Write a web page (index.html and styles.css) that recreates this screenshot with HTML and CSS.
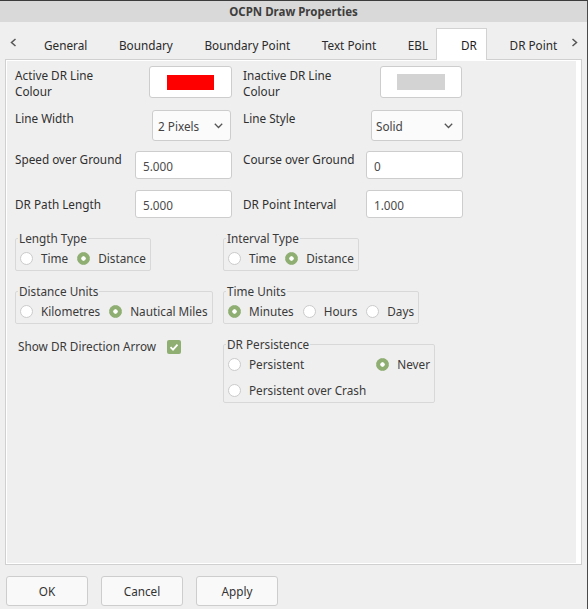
FILE: index.html
```html
<!DOCTYPE html>
<html>
<head>
<meta charset="utf-8">
<title>OCPN Draw Properties</title>
<link rel="stylesheet" href="styles.css">
</head>
<body>
<div class="window">
  <div class="titlebar">OCPN Draw Properties</div>
  <div class="tabbar">
    <svg class="arrow" width="7" height="9" viewBox="0 0 7 9"><path d="M5.5 1 L1.5 4.5 L5.5 8"/></svg>
    <div class="tabs">
      <div class="tab">General</div>
      <div class="tab">Boundary</div>
      <div class="tab">Boundary Point</div>
      <div class="tab">Text Point</div>
      <div class="tab">EBL</div>
      <div class="tab tab-active">DR</div>
      <div class="tab">DR Point</div>
    </div>
    <svg class="arrow" width="7" height="9" viewBox="0 0 7 9"><path d="M1.5 1 L5.5 4.5 L1.5 8"/></svg>
  </div>
  <div class="panel">
    <div class="form">
      <div class="form-row row-colour">
        <div class="field">
          <div class="label label-2line">Active DR Line<br>Colour</div>
          <div class="colour-btn"><span class="swatch swatch-red"></span></div>
        </div>
        <div class="field">
          <div class="label label-2line">Inactive DR Line<br>Colour</div>
          <div class="colour-btn colour-btn-right"><span class="swatch swatch-grey"></span></div>
        </div>
      </div>
      <div class="form-row row-select">
        <div class="field">
          <div class="label">Line Width</div>
          <div class="select select-width"><span>2 Pixels</span><svg class="chev" width="9" height="6" viewBox="0 0 9 6"><path d="M0.8 0.8 L4.5 4.5 L8.2 0.8"/></svg></div>
        </div>
        <div class="field">
          <div class="label">Line Style</div>
          <div class="select select-style"><span>Solid</span><svg class="chev" width="9" height="6" viewBox="0 0 9 6"><path d="M0.8 0.8 L4.5 4.5 L8.2 0.8"/></svg></div>
        </div>
      </div>
      <div class="form-row row-speed">
        <div class="field">
          <div class="label">Speed over Ground</div>
          <div class="input">5.000</div>
        </div>
        <div class="field">
          <div class="label">Course over Ground</div>
          <div class="input">0</div>
        </div>
      </div>
      <div class="form-row row-path">
        <div class="field field-center">
          <div class="label">DR Path Length</div>
          <div class="input">5.000</div>
        </div>
        <div class="field field-center">
          <div class="label">DR Point Interval</div>
          <div class="input">1.000</div>
        </div>
      </div>
    </div>

    <div class="groups">
      <fieldset class="group">
        <legend>Length Type</legend>
        <div class="radio-row">
          <span class="radio"><span class="dot"></span>Time</span>
          <span class="radio"><span class="dot dot-on"></span>Distance</span>
        </div>
      </fieldset>
      <fieldset class="group">
        <legend>Interval Type</legend>
        <div class="radio-row">
          <span class="radio"><span class="dot"></span>Time</span>
          <span class="radio"><span class="dot dot-on"></span>Distance</span>
        </div>
      </fieldset>
      <fieldset class="group">
        <legend>Distance Units</legend>
        <div class="radio-row">
          <span class="radio"><span class="dot"></span>Kilometres</span>
          <span class="radio"><span class="dot dot-on"></span>Nautical Miles</span>
        </div>
      </fieldset>
      <fieldset class="group">
        <legend>Time Units</legend>
        <div class="radio-row">
          <span class="radio"><span class="dot dot-on"></span>Minutes</span>
          <span class="radio"><span class="dot"></span>Hours</span>
          <span class="radio"><span class="dot"></span>Days</span>
        </div>
      </fieldset>
      <div class="check-row">
        <span>Show DR Direction Arrow</span>
        <span class="checkbox"><svg width="14" height="14" viewBox="0 0 14 14"><path d="M3.5 7.2 L6 9.6 L10.5 4.6"/></svg></span>
      </div>
      <fieldset class="group">
        <legend>DR Persistence</legend>
        <div class="radio-grid">
          <span class="radio"><span class="dot"></span>Persistent</span>
          <span class="radio"><span class="dot dot-on"></span>Never</span>
          <span class="radio"><span class="dot"></span>Persistent over Crash</span>
        </div>
      </fieldset>
    </div>
  </div>
  <div class="buttons">
    <div class="button">OK</div>
    <div class="button">Cancel</div>
    <div class="button">Apply</div>
  </div>
</div>
</body>
</html>
```

FILE: styles.css
```css
* {
  box-sizing: border-box;
}

html, body {
  margin: 0;
  padding: 0;
  background: #efefef;
}

body {
  font-family: "Noto Sans", "Open Sans", "DejaVu Sans", sans-serif;
  font-size: 11.75px;
  color: #2f2f2f;
}

.window {
  width: 588px;
  height: 609px;
  background: #efefef;
  border-top: 1px solid #3c3c3c;
  border-right: 1px solid #4a4a4a;
  display: flex;
  flex-direction: column;
}

.titlebar {
  height: 21px;
  background: #d9d9d9;
  display: flex;
  align-items: center;
  justify-content: center;
  font-weight: bold;
  font-size: 11.5px;
  color: #3e3e3e;
  padding-bottom: 1px;
}

.tabbar {
  position: relative;
  z-index: 1;
  height: 38px;
  display: flex;
  align-items: flex-start;
  padding-left: 10px;
}

.arrow {
  margin-top: 16px;
  flex: none;
}

.arrow path {
  fill: none;
  stroke: #555;
  stroke-width: 1.5;
}

.tabs {
  margin-left: 11px;
  width: 543px;
  height: 38px;
  display: flex;
  align-items: flex-end;
  overflow: hidden;
  flex: none;
}

.tab {
  flex: none;
  height: 32px;
  padding: 2px 15.8px 0;
  display: flex;
  align-items: center;
  white-space: nowrap;
  color: #2a2a2a;
}

.tab:first-child {
  padding-left: 16px;
}

.tab-active {
  background: #fff;
  border: 1px solid #d2d2d2;
  border-bottom: none;
  margin-left: -8px;
  margin-right: 7px;
  padding: 0 9px 0 24px;
  color: #1e1e1e;
}

.panel {
  margin: -1px 5px 0;
  height: 506px;
  border: 1px solid #d0d0d0;
  background: #efefef;
  box-shadow: inset 1px 1px 0 #fff, inset -5px -1px 0 #fff;
  padding: 6px 9px;
}

.form {
  display: flex;
  flex-direction: column;
}

.form-row {
  display: grid;
  grid-template-columns: 217px 220px;
  column-gap: 11px;
}

.row-colour {
  height: 32px;
}

.row-select {
  margin-top: 12px;
}

.row-speed {
  margin-top: 10px;
}

.row-path {
  margin-top: 11px;
}

.field {
  display: flex;
  justify-content: space-between;
  align-items: flex-start;
}

.field-center {
  align-items: center;
}

.label {
  line-height: 17px;
}

.label-2line {
  line-height: 16.5px;
  padding-top: 0.5px;
}

.colour-btn {
  width: 83px;
  height: 32px;
  background: #fff;
  border: 1px solid #cdcdcd;
  border-radius: 3px;
  display: flex;
  align-items: center;
  justify-content: center;
}

.colour-btn-right {
  width: 82px;
  margin-right: 1px;
}

.swatch {
  width: 47px;
  height: 15px;
}

.swatch-red {
  background: #ff0000;
}

.swatch-grey {
  background: #d3d3d3;
  width: 48px;
  height: 16px;
}

.select {
  height: 31px;
  background: #fbfbfb;
  border: 1px solid #cdcdcd;
  border-radius: 3px;
  display: flex;
  align-items: center;
  justify-content: space-between;
  color: #444;
}

.select-width {
  width: 79px;
  margin-right: 1px;
  padding: 1px 7px 0 5px;
}

.select-style {
  width: 92px;
  padding: 1px 9px 0 4px;
}

.chev path {
  fill: none;
  stroke: #555;
  stroke-width: 1.3;
}

.input {
  width: 97px;
  height: 28px;
  background: #fff;
  border: 1px solid #cdcdcd;
  border-radius: 3px;
  padding: 1px 7px 0;
  display: flex;
  align-items: center;
  color: #4a4a4a;
}

.groups {
  margin-top: 11px;
  display: grid;
  grid-template-columns: 208px auto;
  row-gap: 11px;
  align-items: start;
  justify-items: start;
}

.group {
  margin: 0;
  padding: 2px 4px 3px;
  border: 1px solid #d8d8d8;
  border-radius: 2px;
  min-width: 0;
}

.group legend {
  padding: 0 1px;
  margin-left: -2px;
  line-height: 18px;
  color: #3a3a3a;
}

.radio-row {
  display: flex;
  align-items: center;
  height: 18px;
  gap: 9px;
}

.radio {
  display: flex;
  align-items: center;
  gap: 8px;
  height: 18px;
  white-space: nowrap;
  color: #3a3a3a;
}

.dot {
  width: 13px;
  height: 13px;
  border-radius: 50%;
  border: 1px solid #cbcbcb;
  background: #fff;
  flex: none;
}

.dot-on {
  border-color: #8fae72;
  background: radial-gradient(circle, #fff 0 1.9px, #8fae72 2.5px);
}

.radio-grid {
  display: grid;
  grid-template-columns: auto auto;
  column-gap: 10px;
  row-gap: 8px;
}

.check-row {
  margin-top: 3px;
  padding-left: 3px;
  display: flex;
  align-items: center;
  gap: 11px;
  line-height: 17px;
  color: #3a3a3a;
}

.checkbox {
  width: 14px;
  height: 14px;
  border-radius: 2px;
  background: #8fae72;
  display: flex;
}

.checkbox path {
  fill: none;
  stroke: #fff;
  stroke-width: 1.8;
}

.buttons {
  margin-top: 11px;
  padding-left: 6px;
  display: flex;
  gap: 13px;
}

.button {
  width: 82px;
  height: 30px;
  background: #f9f9f9;
  border: 1px solid #cdcdcd;
  border-radius: 3px;
  display: flex;
  align-items: center;
  justify-content: center;
  color: #333;
}
```
